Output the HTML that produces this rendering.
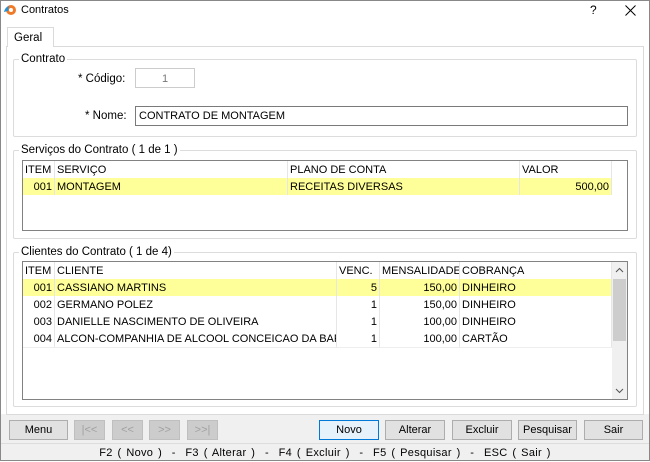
<!DOCTYPE html>
<html><head><meta charset="utf-8"><style>
*{box-sizing:border-box;margin:0;padding:0}
body{width:650px;height:461px;position:relative;background:#fff;font-family:"Liberation Sans",sans-serif;font-size:11px;color:#000;overflow:hidden}
.a{position:absolute}
.win{left:0;top:0;width:650px;height:461px;border:1px solid #888}
.gb{border:1px solid #dcdcdc;border-radius:2px}
.gt{background:#fff;padding:0 2px;line-height:13px;top:-7px;left:5px}
.in{border:1px solid #7a7a7a;background:#fff;line-height:18px;padding-left:3px}
.cell{position:absolute;height:17px;line-height:19px;border-right:1px solid #e6e6e6;padding:0 2px;white-space:nowrap;overflow:hidden}
.r{text-align:right}
.btn{position:absolute;top:420px;height:20px;border:1px solid #adadad;background:#e1e1e1;text-align:center;line-height:19px}
.dis{color:#a0a0a0;background:#ccc;border-color:#bfbfbf}
</style></head><body>
<div class="a win"></div>
<svg class="a" style="left:3px;top:3px" width="14" height="14" viewBox="0 0 14 14"><circle cx="8" cy="7" r="5" fill="#f07a28"/><circle cx="8" cy="7" r="2" fill="#fff"/><path d="M1 9 Q2 4 6 3 L5 8 Z" fill="#2a8fd0"/></svg>
<div class="a" style="left:21px;top:4px;font-size:11px">Contratos</div>
<div class="a" style="left:590px;top:3px;font-size:12px">?</div>
<svg class="a" style="left:625px;top:5px" width="11" height="11"><path d="M0.5 0.5L10.5 10.5M10.5 0.5L0.5 10.5" stroke="#000" stroke-width="1"/></svg>
<div class="a" style="left:1px;top:414px;width:648px;height:46px;background:#f0f0f0"></div>
<div class="a" style="left:6px;top:46px;width:638px;height:369px;border:1px solid #dadada;background:#fff"></div>
<div class="a" style="left:7px;top:27px;width:47px;height:20px;border:1px solid #dadada;border-bottom:none;background:#fff;padding:4px 0 0 6px;font-size:11.5px">Geral</div>
<div class="a gb" style="left:13px;top:59px;width:624px;height:78px"><div class="a gt" style="font-size:11.5px">Contrato</div></div>
<div class="a" style="left:78px;top:73px;font-size:11.5px">* Código:</div>
<div class="a in" style="left:135px;top:68px;width:60px;height:20px;border-color:#ccc;color:#777;text-align:center;padding:0;line-height:20px">1</div>
<div class="a" style="left:85px;top:110px;font-size:11.5px">* Nome:</div>
<div class="a in" style="left:135px;top:106px;width:493px;height:20px">CONTRATO DE MONTAGEM</div>
<div class="a gb" style="left:13px;top:150px;width:624px;height:89px"><div class="a gt" style="font-size:11.5px">Serviços do Contrato ( 1 de 1 )</div></div>
<div class="a" style="left:22px;top:160px;width:606px;height:71px;border:1px solid #828282;background:#fff">
<div class="cell" style="left:0;top:0;width:32px">ITEM</div>
<div class="cell" style="left:32px;top:0;width:233px">SERVIÇO</div>
<div class="cell" style="left:265px;top:0;width:232px">PLANO DE CONTA</div>
<div class="cell" style="left:497px;top:0;width:92px">VALOR</div>
<div class="a" style="left:0;top:17px;width:589px;height:17px;background:#ffff99"></div>
<div class="cell r" style="left:0;top:17px;width:32px">001</div>
<div class="cell" style="left:32px;top:17px;width:233px">MONTAGEM</div>
<div class="cell" style="left:265px;top:17px;width:232px">RECEITAS DIVERSAS</div>
<div class="cell r" style="left:497px;top:17px;width:92px">500,00</div>
</div>
<div class="a gb" style="left:13px;top:252px;width:624px;height:155px"><div class="a gt" style="font-size:11.5px">Clientes do Contrato ( 1 de 4)</div></div>
<div class="a" style="left:22px;top:261px;width:606px;height:139px;border:1px solid #828282;background:#fff">
<div class="cell" style="left:0;top:0;width:32px">ITEM</div>
<div class="cell" style="left:32px;top:0;width:282px">CLIENTE</div>
<div class="cell" style="left:314px;top:0;width:43px">VENC.</div>
<div class="cell" style="left:357px;top:0;width:80px">MENSALIDADE</div>
<div class="cell" style="left:437px;top:0;width:152px">COBRANÇA</div>
<div class="a" style="left:0;top:17px;width:589px;height:17px;background:#ffff99"></div>
<div class="cell r" style="left:0;top:17px;width:32px">001</div><div class="cell" style="left:32px;top:17px;width:282px">CASSIANO MARTINS</div><div class="cell r" style="left:314px;top:17px;width:43px">5</div><div class="cell r" style="left:357px;top:17px;width:80px">150,00</div><div class="cell" style="left:437px;top:17px;width:152px">DINHEIRO</div>
<div class="cell r" style="left:0;top:34px;width:32px">002</div><div class="cell" style="left:32px;top:34px;width:282px">GERMANO POLEZ</div><div class="cell r" style="left:314px;top:34px;width:43px">1</div><div class="cell r" style="left:357px;top:34px;width:80px">150,00</div><div class="cell" style="left:437px;top:34px;width:152px">DINHEIRO</div>
<div class="cell r" style="left:0;top:51px;width:32px">003</div><div class="cell" style="left:32px;top:51px;width:282px">DANIELLE NASCIMENTO DE OLIVEIRA</div><div class="cell r" style="left:314px;top:51px;width:43px">1</div><div class="cell r" style="left:357px;top:51px;width:80px">100,00</div><div class="cell" style="left:437px;top:51px;width:152px">DINHEIRO</div>
<div class="cell r" style="left:0;top:68px;width:32px">004</div><div class="cell" style="left:32px;top:68px;width:282px">ALCON-COMPANHIA DE ALCOOL CONCEICAO DA BARRA</div><div class="cell r" style="left:314px;top:68px;width:43px">1</div><div class="cell r" style="left:357px;top:68px;width:80px">100,00</div><div class="cell" style="left:437px;top:68px;width:152px">CARTÃO</div>
<div class="a" style="left:0;top:85px;width:589px;height:1px;background:#eee"></div>
<div class="a" style="left:589px;top:0;width:15px;height:137px;background:#f0f0f0"></div>
<div class="a" style="left:590px;top:17px;width:13px;height:62px;background:#cdcdcd"></div>
<svg class="a" style="left:592px;top:5px" width="9" height="6"><path d="M1 5L4.5 1.5L8 5" stroke="#555" fill="none"/></svg>
<svg class="a" style="left:592px;top:126px" width="9" height="6"><path d="M1 1L4.5 4.5L8 1" stroke="#555" fill="none"/></svg>
</div>
<div class="btn" style="left:9px;width:59px">Menu</div>
<div class="btn dis" style="left:74px;width:31px">|&lt;&lt;</div>
<div class="btn dis" style="left:112px;width:31px">&lt;&lt;</div>
<div class="btn dis" style="left:149px;width:31px">&gt;&gt;</div>
<div class="btn dis" style="left:187px;width:31px">&gt;&gt;|</div>
<div class="btn" style="left:319px;width:60px;border:1px solid #0078d7;background:#e5f1fb">Novo</div>
<div class="btn" style="left:385px;width:60px">Alterar</div>
<div class="btn" style="left:452px;width:60px">Excluir</div>
<div class="btn" style="left:518px;width:59px">Pesquisar</div>
<div class="btn" style="left:584px;width:59px">Sair</div>
<div class="a" style="left:1px;top:443px;width:648px;height:17px;border-top:1px solid #ddd;text-align:center;line-height:18px;letter-spacing:0.3px;word-spacing:1.5px">F2 ( Novo )&nbsp; - &nbsp;F3 ( Alterar )&nbsp; - &nbsp;F4 ( Excluir )&nbsp; - &nbsp;F5 ( Pesquisar )&nbsp; - &nbsp;ESC ( Sair )</div>
</body></html>
